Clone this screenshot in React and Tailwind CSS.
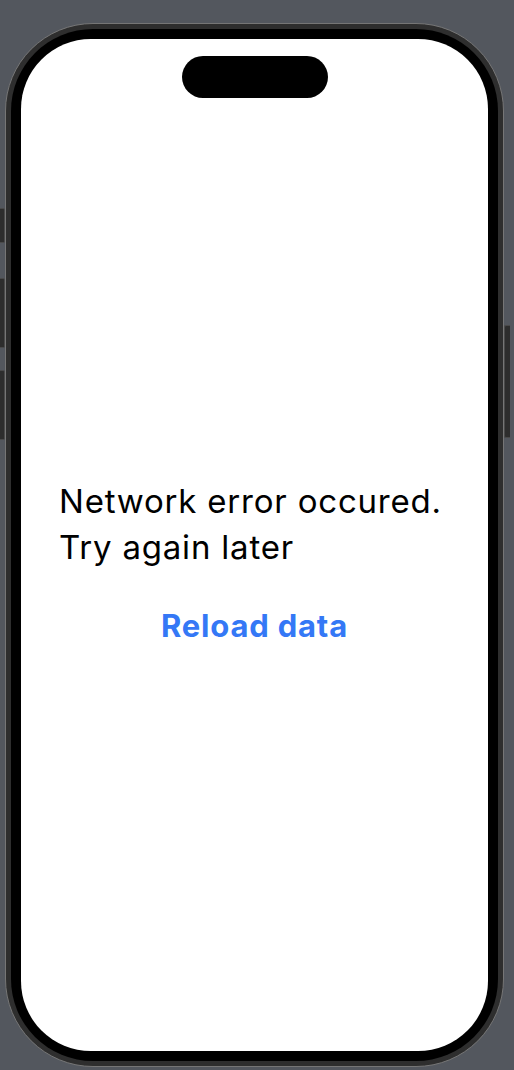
// Phone preview of the offline / network-error screen
const App = () => {
  return (
    <div
      className="w-[514px] h-[1070px] bg-[#53575e] overflow-hidden flex items-start"
      style={{ fontFamily: "Inter, 'Noto Sans', sans-serif" }}
    >
      {/* ── Left hardware buttons ──────────────────────── */}
      <div className="w-[5px] shrink-0 flex flex-col pt-[208px] gap-[35px]">
        <div className="h-[35px] bg-[#2d2d2d] border border-l-0 border-[#4a4a4a] rounded-r-[2px]" />
        <div className="flex flex-col gap-[22px]">
          <div className="h-[70px] bg-[#2d2d2d] border border-l-0 border-[#4a4a4a] rounded-r-[2px]" />
          <div className="h-[70px] bg-[#2d2d2d] border border-l-0 border-[#4a4a4a] rounded-r-[2px]" />
        </div>
      </div>

      {/* ── Device frame ───────────────────────────────── */}
      <div className="mt-[23px] w-[499px] h-[1044px] shrink-0 rounded-[88px] border border-[#767676] bg-[#2e2e2e] p-[5px]">
        <div className="w-full h-full rounded-[82px] bg-black p-[10px]">
          <div className="w-full h-full rounded-[70px] bg-white flex flex-col">
            {/* Dynamic island */}
            <div className="mx-auto mt-[17px] w-[146px] h-[42px] rounded-full bg-black shrink-0" />

            {/* Message */}
            <div className="mt-[380px] px-[38px]">
              <p className="text-[33px] leading-[46px] text-black tracking-[0.8px] whitespace-nowrap">
                Network error occured.
                <br />
                Try again later
              </p>
            </div>

            <button className="mx-auto mt-[38px] text-[31px] leading-[36px] font-bold text-[#3478f6] tracking-[0.8px]">
              Reload data
            </button>
          </div>
        </div>
      </div>

      {/* ── Right hardware button ──────────────────────── */}
      <div className="mt-[325px] w-[6px] h-[113px] shrink-0 bg-[#2d2d2d] border border-r-0 border-[#4a4a4a] rounded-l-[2px]" />
    </div>
  );
};

export default App;
